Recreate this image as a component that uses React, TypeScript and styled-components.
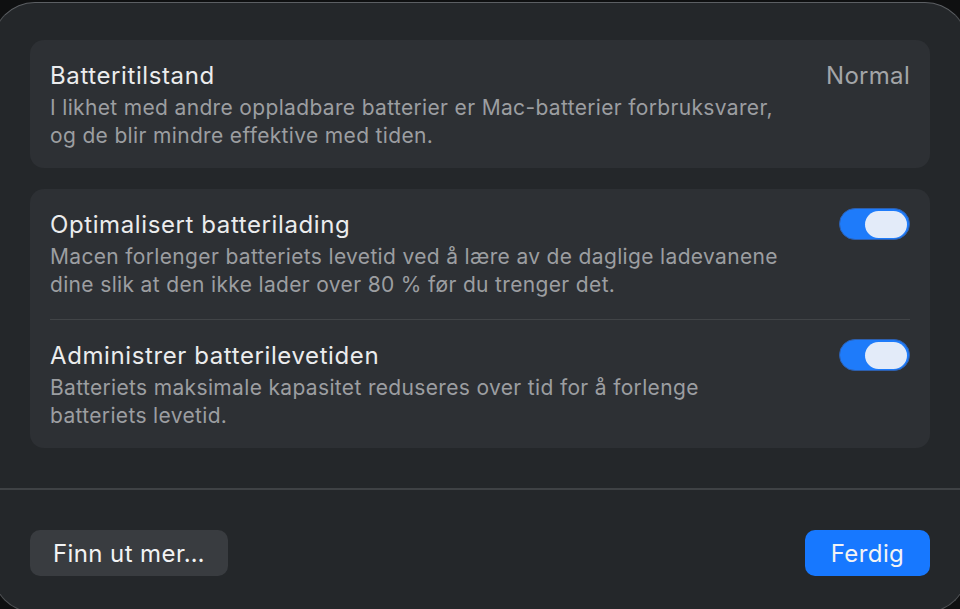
import React from "react";
import styled, { createGlobalStyle } from "styled-components";

const Global = createGlobalStyle`
  html, body {
    margin: 0;
    padding: 0;
    background: #0f1011;
    overflow: hidden;
    height: 609px;
  }
  * { box-sizing: border-box; }
`;

const Window = styled.div`
  margin: 2px 0 0 -8px;
  width: 976px;
  height: 611px;
  border-radius: 43px;
  border: 1px solid #4e5154;
  border-top-color: #5c5f63;
  background: #24272a;
  display: flex;
  flex-direction: column;
  font-family: Inter, "Noto Sans", sans-serif;
  color: #e9eaeb;
  overflow: hidden;
`;

const Content = styled.div`
  padding: 37px 37px 0;
  display: flex;
  flex-direction: column;
  gap: 21px;
`;

const Card = styled.div`
  background: #2d3034;
  border-radius: 14px;
  padding: 0 20px;
  display: flex;
  flex-direction: column;
`;

const Row = styled.div<{ $divider?: boolean; $pb?: number }>`
  display: flex;
  align-items: flex-start;
  gap: 20px;
  padding: 21px 0 ${(p) => p.$pb ?? 20}px;
  border-top: ${(p) => (p.$divider ? "1px solid #414447" : "none")};
`;

const TextCol = styled.div`
  flex: 1;
  display: flex;
  flex-direction: column;
  gap: 4px;
`;

const Title = styled.div`
  font-size: 24px;
  line-height: 29px;
  color: #ebeced;
  letter-spacing: 0.6px;
`;

const Desc = styled.div`
  font-size: 21px;
  line-height: 28px;
  color: #9c9ea1;
  letter-spacing: 0.34px;
`;

const Value = styled.div`
  font-size: 24px;
  line-height: 29px;
  color: #a3a5a8;
  letter-spacing: 0.3px;
`;

const Track = styled.div`
  width: 71px;
  height: 32px;
  border-radius: 16px;
  background: #1e7bfa;
  border: 1px solid #2d5fae;
  display: flex;
  align-items: center;
  justify-content: flex-end;
  padding: 0 2px;
  flex-shrink: 0;
  margin-top: -2px;
`;

const Knob = styled.div`
  width: 42px;
  height: 27px;
  border-radius: 14px;
  background: #e3ebf9;
`;

const Separator = styled.div`
  margin-top: 40px;
  height: 2px;
  background: #3f4245;
`;

const Footer = styled.div`
  padding: 40px 37px 0;
  display: flex;
  justify-content: space-between;
`;

const Button = styled.button<{ $primary?: boolean }>`
  height: 46px;
  border: none;
  border-radius: 10px;
  padding: 0 0 0 ${(p) => (p.$primary ? "0" : "23px")};
  text-align: ${(p) => (p.$primary ? "center" : "left")};
  font-family: Inter, "Noto Sans", sans-serif;
  font-size: 24px;
  letter-spacing: 0.4px;
  color: #f2f3f4;
  background: ${(p) => (p.$primary ? "#1778ff" : "#393c40")};
  width: ${(p) => (p.$primary ? "125px" : "198px")};
`;

const Toggle = () => (
  <Track>
    <Knob />
  </Track>
);

export default function App() {
  return (
    <>
      <Global />
      <Window>
        <Content>
          <Card>
            <Row $pb={18}>
              <TextCol>
                <Title>Batteritilstand</Title>
                <Desc>
                  I likhet med andre oppladbare batterier er Mac-batterier forbruksvarer,
                  <br />
                  og de blir mindre effektive med tiden.
                </Desc>
              </TextCol>
              <Value>Normal</Value>
            </Row>
          </Card>
          <Card>
            <Row>
              <TextCol>
                <Title>Optimalisert batterilading</Title>
                <Desc>
                  Macen forlenger batteriets levetid ved å lære av de daglige ladevanene
                  <br />
                  dine slik at den ikke lader over 80 % før du trenger det.
                </Desc>
              </TextCol>
              <Toggle />
            </Row>
            <Row $divider $pb={18}>
              <TextCol>
                <Title>Administrer batterilevetiden</Title>
                <Desc>
                  Batteriets maksimale kapasitet reduseres over tid for å forlenge
                  <br />
                  batteriets levetid.
                </Desc>
              </TextCol>
              <Toggle />
            </Row>
          </Card>
        </Content>
        <Separator />
        <Footer>
          <Button>Finn ut mer…</Button>
          <Button $primary>Ferdig</Button>
        </Footer>
      </Window>
    </>
  );
}
